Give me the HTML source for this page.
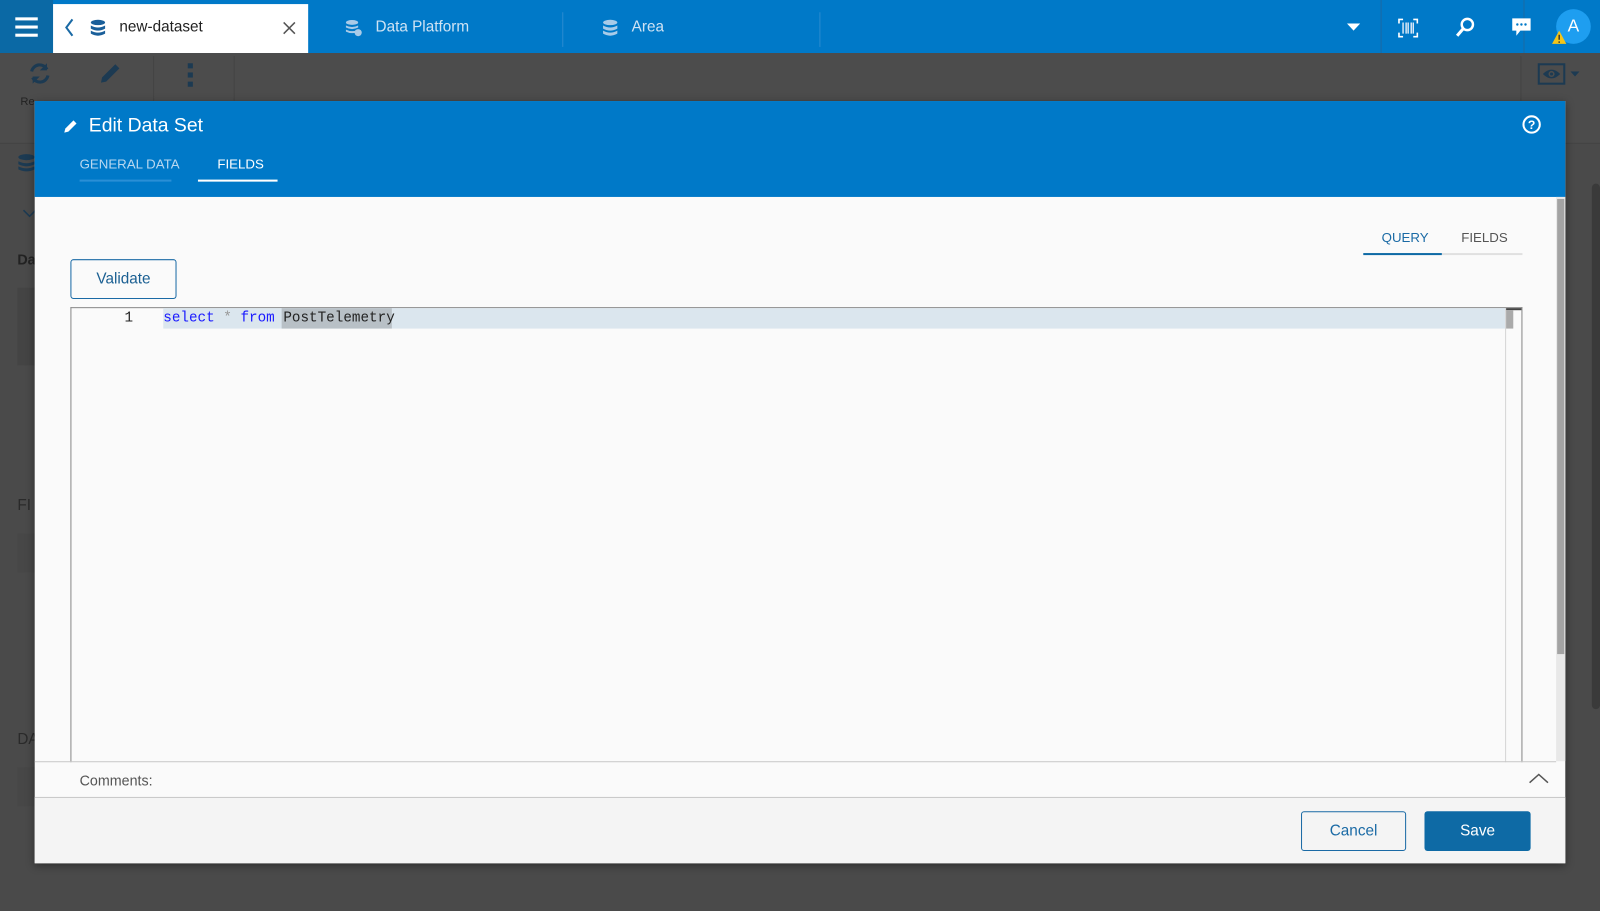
<!DOCTYPE html>
<html><head><meta charset="utf-8"><style>
*{box-sizing:border-box;margin:0;padding:0}
body{width:1600px;height:911px;overflow:hidden;background:#4a4a4a;font-family:"Liberation Sans",sans-serif;position:relative}
#w{position:absolute;left:0;top:0;width:1568px;height:893px;transform:scale(1.020408);transform-origin:0 0}
.abs{position:absolute}
.top{left:0;top:0;width:1568px;height:52px;background:#0079c8}
.mono{font-family:"Liberation Mono",monospace}
</style></head><body><div id="w">
<div class="abs top"></div>
<div class="abs" style="left:0;top:0;width:52px;height:52px;background:#0b69a5"></div>
<div class="abs" style="left:15px;top:17px;width:22px;height:3px;background:#fff;box-shadow:0 8px 0 #fff,0 16px 0 #fff"></div>
<div class="abs" style="left:52px;top:4px;width:250px;height:48px;background:#fff"></div>
<svg class="abs" style="left:62px;top:17px" width="12" height="20"><path d="M9 2 L3 10 L9 18" stroke="#1a6aa5" stroke-width="2" fill="none"/></svg>
<svg class="abs" style="left:88px;top:19px" width="16" height="17"><ellipse cx="8" cy="3" rx="7" ry="2.6" fill="#1a5f9a"/><path d="M1 6 Q8 10 15 6 V9 Q8 13 1 9Z M1 11 Q8 15 15 11 V14 Q8 18 1 14Z" fill="#1a5f9a"/></svg>
<div class="abs" style="left:117px;top:18px;font-size:15px;color:#222">new-dataset</div>
<svg class="abs" style="left:277px;top:21px" width="13" height="13"><path d="M1 1L12 12M12 1L1 12" stroke="#555" stroke-width="1.5"/></svg>
<svg class="abs" style="left:338px;top:19px" width="18" height="17"><ellipse cx="7" cy="3" rx="6" ry="2.4" fill="#a9cbe8"/><path d="M1 6 Q7 9 13 6 V8 Q7 11 1 8Z M1 10 Q7 13 13 10 V12 Q7 15 1 12Z" fill="#a9cbe8"/><circle cx="13" cy="13" r="3.5" fill="#a9cbe8"/></svg>
<div class="abs" style="left:368px;top:18px;font-size:15px;color:#cfe3f4">Data Platform</div>
<div class="abs" style="left:551px;top:12px;width:1px;height:34px;background:#2a8bd0"></div>
<svg class="abs" style="left:590px;top:19px" width="16" height="17"><ellipse cx="8" cy="3" rx="7" ry="2.6" fill="#a9cbe8"/><path d="M1 6 Q8 10 15 6 V9 Q8 13 1 9Z M1 11 Q8 15 15 11 V14 Q8 18 1 14Z" fill="#a9cbe8"/></svg>
<div class="abs" style="left:619px;top:18px;font-size:15px;color:#cfe3f4">Area</div>
<div class="abs" style="left:803px;top:12px;width:1px;height:34px;background:#2a8bd0"></div>
<svg class="abs" style="left:1320px;top:23px" width="13" height="8"><path d="M0 0H13L6.5 7Z" fill="#fff"/></svg>
<div class="abs" style="left:1353px;top:0;width:1px;height:52px;background:#1a6aa5"></div>
<div class="abs" style="left:1493px;top:0;width:1px;height:52px;background:#1a6aa5"></div>
<svg class="abs" style="left:1370px;top:18px" width="20" height="19"><path d="M1 5V1H5M15 1H19V5M19 14V18H15M5 18H1V14" stroke="#fff" stroke-width="1.6" fill="none"/><path d="M5 4V15M8 4V15M10 4V15M13 4V15M15 4V15" stroke="#e0ecf8" stroke-width="1.4"/></svg>
<svg class="abs" style="left:1425px;top:16px" width="22" height="22"><circle cx="13" cy="8" r="5.5" stroke="#fff" stroke-width="2.4" fill="none"/><path d="M9 12L3 19" stroke="#fff" stroke-width="3"/></svg>
<svg class="abs" style="left:1481px;top:17px" width="20" height="20"><path d="M1 1H19V13H9L5 18V13H1Z" fill="#fff"/><circle cx="6" cy="7" r="1.2" fill="#0079c8"/><circle cx="10" cy="7" r="1.2" fill="#0079c8"/><circle cx="14" cy="7" r="1.2" fill="#0079c8"/></svg>
<div class="abs" style="left:1525px;top:9px;width:34px;height:34px;border-radius:50%;background:#1e9ef0;color:#fff;font-size:17px;text-align:center;line-height:34px">A</div>
<svg class="abs" style="left:1520px;top:29px" width="16" height="15"><path d="M8 1L15 14H1Z" fill="#f5c518"/><path d="M8 5V10M8 11.5V13" stroke="#333" stroke-width="1.4"/></svg>

<div class="abs" style="left:0;top:52px;width:1568px;height:88px;background:#4c4c4c"></div>
<svg class="abs" style="left:27px;top:60px" width="24" height="24"><path d="M4 10A8 8 0 0 1 19 8M20 14A8 8 0 0 1 5 16" stroke="#1c3a52" stroke-width="3" fill="none"/><path d="M19 2V9H12Z M5 22V15H12Z" fill="#1c3a52"/></svg>
<svg class="abs" style="left:96px;top:60px" width="24" height="24"><path d="M3 21L4 16L17 3L21 7L8 20Z" fill="#1c3a52"/></svg>
<div class="abs" style="left:184px;top:62px;width:5px;height:5px;background:#1c3a52;box-shadow:0 9px 0 #1c3a52,0 18px 0 #1c3a52"></div>
<div class="abs" style="left:150px;top:55px;width:1px;height:45px;background:#444"></div>
<div class="abs" style="left:229px;top:55px;width:1px;height:45px;background:#444"></div>
<div class="abs" style="left:20px;top:94px;font-size:11px;color:#222">Re</div>
<div class="abs" style="left:1507px;top:62px;width:27px;height:21px;border:2px solid #1c3a52"></div>
<svg class="abs" style="left:1510px;top:65px" width="21" height="15"><path d="M2 7.5Q10.5 -1 19 7.5Q10.5 16 2 7.5Z" fill="#1c3a52"/><circle cx="10.5" cy="7.5" r="3" fill="#4c4c4c"/><circle cx="10.5" cy="7.5" r="1.5" fill="#1c3a52"/></svg>
<svg class="abs" style="left:1539px;top:70px" width="9" height="6"><path d="M0 0H9L4.5 5Z" fill="#1c3a52"/></svg>
<div class="abs" style="left:1490px;top:55px;width:1px;height:90px;background:#444"></div>
<div class="abs" style="left:0;top:140px;width:34px;height:1px;background:#444"></div>
<div class="abs" style="left:1534px;top:140px;width:34px;height:1px;background:#444"></div>
<svg class="abs" style="left:17px;top:150px" width="18" height="20"><ellipse cx="9" cy="4" rx="8" ry="3" fill="#1c3a52"/><path d="M1 8Q9 12 17 8V11Q9 15 1 11Z M1 13Q9 17 17 13V16Q9 20 1 16Z" fill="#1c3a52"/></svg>
<svg class="abs" style="left:22px;top:205px" width="14" height="9"><path d="M1 1L7 7L13 1" stroke="#1c3a52" stroke-width="1.5" fill="none"/></svg>
<div class="abs" style="left:17px;top:246px;font-size:14px;font-weight:bold;color:#222">Da</div>
<div class="abs" style="left:17px;top:282px;width:20px;height:76px;background:#444"></div>
<div class="abs" style="left:17px;top:487px;font-size:15px;color:#2a2a2a">FI</div>
<div class="abs" style="left:17px;top:523px;width:20px;height:38px;background:#474747"></div>
<div class="abs" style="left:17px;top:716px;font-size:15px;color:#2a2a2a">DA</div>
<div class="abs" style="left:17px;top:752px;width:20px;height:38px;background:#474747"></div>
<div class="abs" style="left:1560px;top:180px;width:8px;height:515px;background:#3a3a3a;border-radius:4px"></div>

<div class="abs" style="left:34px;top:99px;width:1500px;height:747px;background:#fafafa;box-shadow:0 2px 8px rgba(0,0,0,.4)"></div>
<div class="abs" style="left:34px;top:99px;width:1500px;height:94px;background:#0079c8"></div>
<svg class="abs" style="left:62px;top:116px" width="15" height="15"><path d="M1 14L2 10L10 2L13 5L5 13Z" fill="#fff"/></svg>
<div class="abs" style="left:87px;top:113px;font-size:19px;color:#fff">Edit Data Set</div>
<svg class="abs" style="left:1491px;top:112px" width="20" height="20"><circle cx="10" cy="10" r="8" stroke="#fff" stroke-width="2" fill="none"/><text x="10" y="14.5" font-size="12" font-weight="bold" fill="#fff" text-anchor="middle" font-family="Liberation Sans">?</text></svg>
<div class="abs" style="left:78px;top:153px;font-size:13px;color:#b9d8f0">GENERAL DATA</div>
<div class="abs" style="left:78px;top:176px;width:90px;height:2px;background:#2a8fd6"></div>
<div class="abs" style="left:213px;top:153px;font-size:13px;color:#fff">FIELDS</div>
<div class="abs" style="left:194px;top:176px;width:78px;height:2px;background:#fff"></div>
<div class="abs" style="left:1525px;top:193px;width:9px;height:553px;background:#e8e8e8"></div>
<div class="abs" style="left:1526px;top:195px;width:7px;height:446px;background:#a3a3a3"></div>
<div class="abs" style="left:1354px;top:225px;font-size:13px;color:#1a6aa5">QUERY</div>
<div class="abs" style="left:1432px;top:225px;font-size:13px;color:#555">FIELDS</div>
<div class="abs" style="left:1413px;top:248px;width:79px;height:2px;background:#e0e0e0"></div>
<div class="abs" style="left:1336px;top:248px;width:77px;height:2px;background:#0e6aa5"></div>
<div class="abs" style="left:69px;top:254px;width:104px;height:39px;border:1px solid #1a6aa5;border-radius:3px;font-size:15px;color:#1a5f92;text-align:center;line-height:37px">Validate</div>
<div class="abs" style="left:69px;top:301px;width:1423px;height:446px;border:1px solid #888;border-bottom:none;background:#fafafa"></div>
<div class="abs" style="left:160px;top:302px;width:1315px;height:20px;background:#dbe6ee"></div>
<div class="abs" style="left:276px;top:302px;width:108px;height:20px;background:#b8c0c6"></div>
<div class="abs mono" style="left:122px;top:304px;font-size:14px;color:#222">1</div>
<div class="abs mono" style="left:160px;top:304px;font-size:14px;color:#222;white-space:pre"><span style="color:#1a1aff">select</span> <span style="color:#999">*</span> <span style="color:#1a1aff">from</span> PostTelemetry</div>
<div class="abs" style="left:1475px;top:302px;width:1px;height:445px;background:#d4d4d4"></div>
<div class="abs" style="left:1476px;top:302px;width:15px;height:2px;background:#444"></div>
<div class="abs" style="left:1476px;top:304px;width:7px;height:18px;background:#aaa"></div>
<div class="abs" style="left:34px;top:746px;width:1491px;height:1px;background:#c8c8c8"></div>
<div class="abs" style="left:78px;top:757px;font-size:14px;color:#555">Comments:</div>
<svg class="abs" style="left:1498px;top:757px" width="20" height="12"><path d="M1 10L10 2L19 10" stroke="#555" stroke-width="1.5" fill="none"/></svg>
<div class="abs" style="left:34px;top:781px;width:1500px;height:65px;background:#f4f4f4;border-top:1px solid #c8c8c8"></div>
<div class="abs" style="left:1275px;top:795px;width:103px;height:39px;border:1px solid #1a6aa5;border-radius:3px;font-size:15px;color:#1a6aa5;text-align:center;line-height:37px">Cancel</div>
<div class="abs" style="left:1396px;top:795px;width:104px;height:39px;background:#0e6aa5;border-radius:3px;font-size:15px;color:#fff;text-align:center;line-height:39px">Save</div>
</div></body></html>
